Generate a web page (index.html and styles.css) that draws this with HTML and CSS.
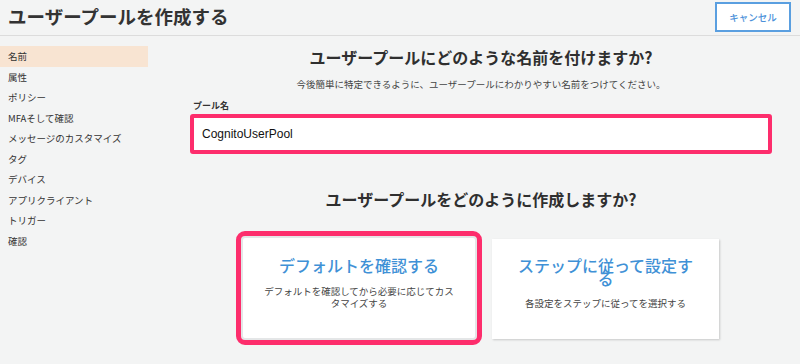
FILE: index.html
```html
<!DOCTYPE html>
<html lang="ja">
<head>
    <meta charset="UTF-8">
    <meta name="viewport" content="width=device-width, initial-scale=1.0">
    <title>ユーザープールを作成する</title>
    <link rel="stylesheet" href="styles.css">
</head>
<body>

    <div class="header">
        <h1>ユーザープールを作成する</h1>
        <button class="cancel-btn">キャンセル</button>
    </div>

    <div class="page">
        <ul class="steps">
            <li class="active">名前</li>
            <li>属性</li>
            <li>ポリシー</li>
            <li>MFAそして確認</li>
            <li>メッセージのカスタマイズ</li>
            <li>タグ</li>
            <li>デバイス</li>
            <li>アプリクライアント</li>
            <li>トリガー</li>
            <li>確認</li>
        </ul>

        <div class="main">
            <h2>ユーザープールにどのような名前を付けますか?</h2>
            <p class="lead">今後簡単に特定できるように、ユーザープールにわかりやすい名前をつけてください。</p>

            <label for="poolName">プール名</label>
            <input type="text" id="poolName" value="CognitoUserPool">

            <h2 class="second">ユーザープールをどのように作成しますか?</h2>

            <div class="choices">
                <div class="card card-default selected">
                    <div class="card-title">デフォルトを確認する</div>
                    <div class="card-text">デフォルトを確認してから必要に応じてカスタマイズする</div>
                </div>
                <div class="card card-step">
                    <div class="card-title">ステップに従って設定する</div>
                    <div class="card-text">各設定をステップに従ってを選択する</div>
                </div>
            </div>
        </div>
    </div>

</body>
</html>
```

FILE: styles.css
```css
html, body {
    height: 100%;
}
body {
    font-family: "Noto Sans CJK JP", "Liberation Sans", sans-serif;
    margin: 0;
    background-color: #f3f4f4;
    color: #333;
}
.header {
    display: flex;
    align-items: center;
    justify-content: space-between;
    height: 35px;
    border-bottom: 1px solid #dcdcdc;
    padding: 0 9px 0 8px;
}
.header h1 {
    margin: 0;
    font-size: 18.5px;
    font-weight: bold;
    color: #333;
    margin-top: -3px;
}
.cancel-btn {
    width: 76px;
    height: 30px;
    margin-top: -2px;
    background-color: #fff;
    border: 2px solid #5a9fe0;
    color: #4a90d9;
    font-family: inherit;
    font-size: 9.5px;
    font-weight: 500;
    cursor: pointer;
}
.page {
    display: flex;
}
.steps {
    list-style: none;
    margin: 10px 0 0;
    padding: 0;
    width: 148px;
    flex-shrink: 0;
}
.steps li {
    height: 20.5px;
    line-height: 20.5px;
    padding-left: 8px;
    font-size: 9.5px;
    color: #333;
}
.steps li.active {
    background-color: #f8e4d2;
}
.main {
    flex: 1;
    margin-left: 14px;
    padding: 0 28px;
    display: flex;
    flex-direction: column;
}
h2 {
    margin: 10px 0 0;
    font-size: 16px;
    line-height: 22px;
    text-align: center;
    color: #2f2f2f;
}
.lead {
    margin: 9px 0 0;
    font-size: 9.5px;
    line-height: 14px;
    text-align: center;
    color: #444;
}
label {
    margin-top: 9px;
    padding-left: 3px;
    font-size: 9px;
    line-height: 12px;
    font-weight: bold;
    color: #333;
}
input {
    margin-top: 2px;
    height: 40px;
    box-sizing: border-box;
    border: 4px solid #fd2d6c;
    border-radius: 3px;
    padding: 0 8px;
    font-family: "Liberation Sans", Arial, sans-serif;
    font-size: 12px;
    color: #111;
    background-color: #fff;
    outline: none;
}
h2.second {
    margin-top: 34px;
}
.choices {
    display: flex;
    justify-content: center;
    align-items: flex-start;
    gap: 17px;
    margin-top: 28px;
}
.card {
    height: 100px;
    box-sizing: border-box;
    padding: 20px 18px 0;
    background-color: #fff;
    box-shadow: 1px 1px 2px rgba(0, 0, 0, 0.18);
    text-align: center;
}
.card-default {
    width: 232px;
}
.card-step {
    width: 227px;
    margin-top: 1px;
}
.card.selected {
    box-shadow: 0 0 0 2px #e4e6e7;
    outline: 5px solid #fd2d6c;
    outline-offset: 2px;
    border-radius: 2px;
}
.card-title {
    font-size: 16px;
    line-height: 13px;
    font-weight: 500;
    color: #3f91d6;
}
.card-default .card-title {
    padding-top: 1px;
}
.card-text {
    margin-top: 13px;
    font-size: 9.5px;
    line-height: 12px;
    color: #444;
}
.card-step .card-text {
    margin-top: 12px;
}
```
